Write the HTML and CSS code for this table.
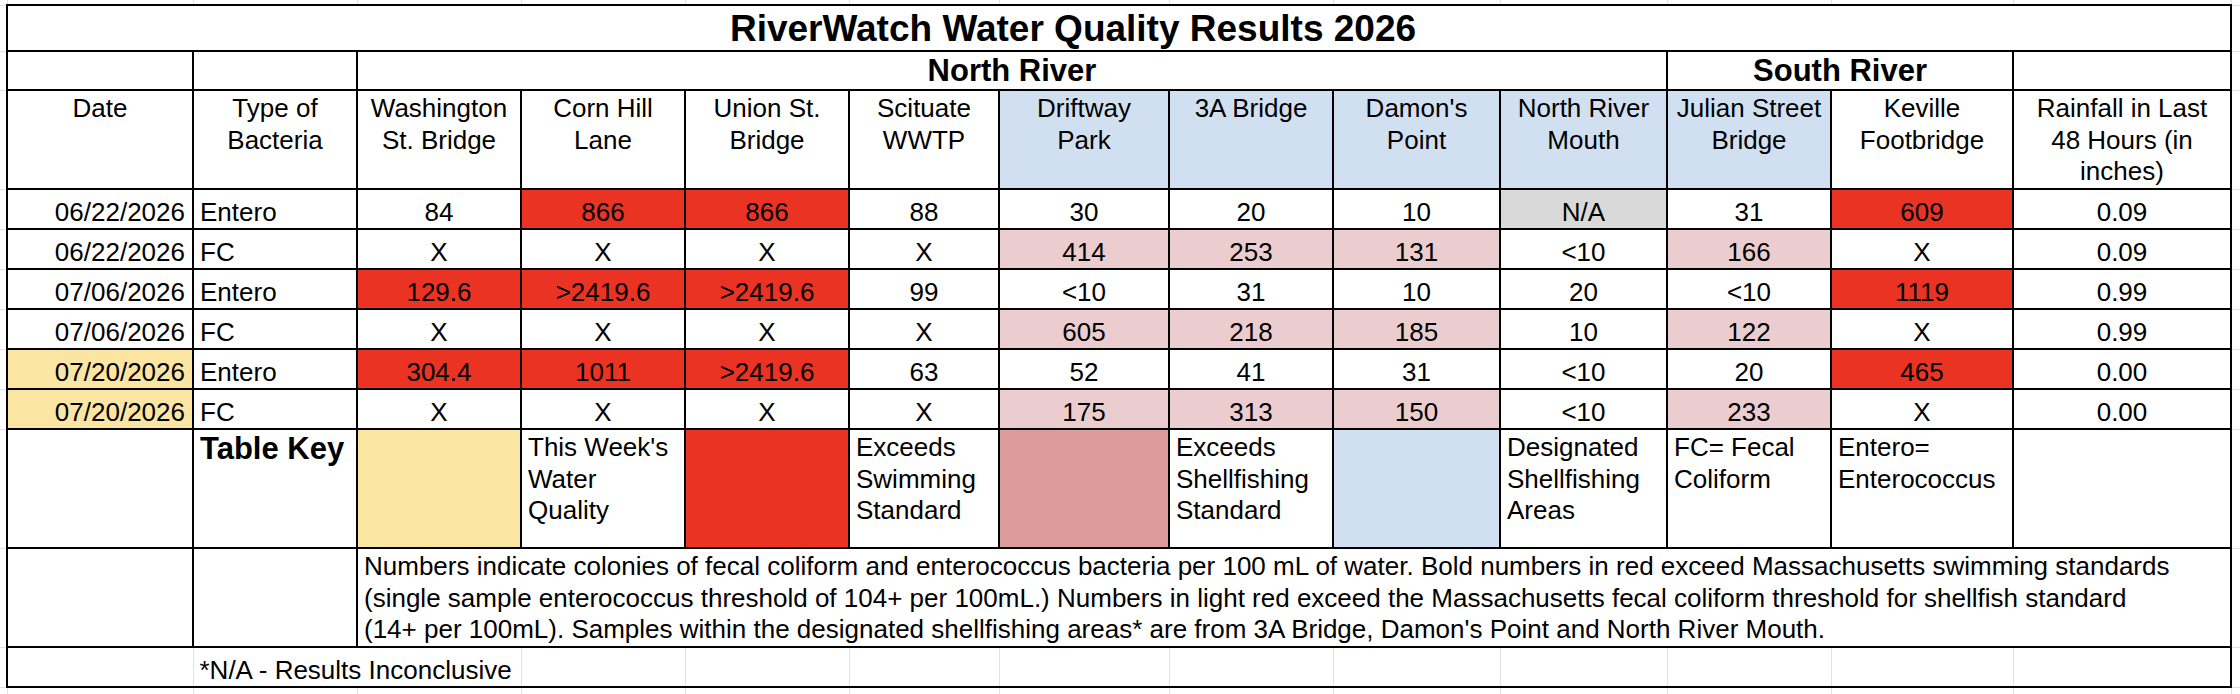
FILE: index.html
```html
<!DOCTYPE html>
<html lang="en">
<head>
<meta charset="utf-8">
<title>RiverWatch Water Quality Results 2026</title>
<link rel="stylesheet" href="styles.css">
</head>
<body>
<table class="sheet">
  <colgroup>
    <col class="w-edge-l">
    <col class="w-date">
    <col class="w-type">
    <col class="w-164">
    <col class="w-164">
    <col class="w-164">
    <col class="w-150">
    <col class="w-170">
    <col class="w-164">
    <col class="w-167">
    <col class="w-167">
    <col class="w-164">
    <col class="w-182">
    <col class="w-218">
    <col class="w-edge-r">
  </colgroup>
  <tbody>
    <tr class="h-edge-top">
      <td class="e et el"></td>
      <td class="e et"></td><td class="e et"></td><td class="e et"></td><td class="e et"></td><td class="e et"></td>
      <td class="e et"></td><td class="e et"></td><td class="e et"></td><td class="e et"></td><td class="e et"></td>
      <td class="e et"></td><td class="e et"></td><td class="e et"></td>
      <td class="e et er"></td>
    </tr>
    <tr class="h-title">
      <td class="e el"></td>
      <td class="title" colspan="13">RiverWatch Water Quality Results 2026</td>
      <td class="e er"></td>
    </tr>
    <tr class="h-river">
      <td class="e el"></td>
      <td></td>
      <td></td>
      <td class="river" colspan="8">North River</td>
      <td class="river" colspan="2">South River</td>
      <td></td>
      <td class="e er"></td>
    </tr>
    <tr class="h-head">
      <td class="e el"></td>
      <td class="hdr">Date</td>
      <td class="hdr">Type of<br>Bacteria</td>
      <td class="hdr">Washington<br>St. Bridge</td>
      <td class="hdr">Corn Hill<br>Lane</td>
      <td class="hdr">Union St.<br>Bridge</td>
      <td class="hdr">Scituate<br>WWTP</td>
      <td class="hdr blue">Driftway<br>Park</td>
      <td class="hdr blue">3A Bridge</td>
      <td class="hdr blue">Damon's<br>Point</td>
      <td class="hdr blue">North River<br>Mouth</td>
      <td class="hdr blue">Julian Street<br>Bridge</td>
      <td class="hdr">Keville<br>Footbridge</td>
      <td class="hdr">Rainfall in Last<br>48 Hours (in<br>inches)</td>
      <td class="e er"></td>
    </tr>
    <tr class="h-data">
      <td class="e el"></td>
      <td class="date">06/22/2026</td>
      <td class="type">Entero</td>
      <td class="num">84</td>
      <td class="num red">866</td>
      <td class="num red">866</td>
      <td class="num">88</td>
      <td class="num">30</td>
      <td class="num">20</td>
      <td class="num">10</td>
      <td class="num na">N/A</td>
      <td class="num">31</td>
      <td class="num red">609</td>
      <td class="num">0.09</td>
      <td class="e er"></td>
    </tr>
    <tr class="h-data">
      <td class="e el"></td>
      <td class="date">06/22/2026</td>
      <td class="type">FC</td>
      <td class="num">X</td>
      <td class="num">X</td>
      <td class="num">X</td>
      <td class="num">X</td>
      <td class="num pink">414</td>
      <td class="num pink">253</td>
      <td class="num pink">131</td>
      <td class="num">&lt;10</td>
      <td class="num pink">166</td>
      <td class="num">X</td>
      <td class="num">0.09</td>
      <td class="e er"></td>
    </tr>
    <tr class="h-data">
      <td class="e el"></td>
      <td class="date">07/06/2026</td>
      <td class="type">Entero</td>
      <td class="num red">129.6</td>
      <td class="num red">&gt;2419.6</td>
      <td class="num red">&gt;2419.6</td>
      <td class="num">99</td>
      <td class="num">&lt;10</td>
      <td class="num">31</td>
      <td class="num">10</td>
      <td class="num">20</td>
      <td class="num">&lt;10</td>
      <td class="num red">1119</td>
      <td class="num">0.99</td>
      <td class="e er"></td>
    </tr>
    <tr class="h-data">
      <td class="e el"></td>
      <td class="date">07/06/2026</td>
      <td class="type">FC</td>
      <td class="num">X</td>
      <td class="num">X</td>
      <td class="num">X</td>
      <td class="num">X</td>
      <td class="num pink">605</td>
      <td class="num pink">218</td>
      <td class="num pink">185</td>
      <td class="num">10</td>
      <td class="num pink">122</td>
      <td class="num">X</td>
      <td class="num">0.99</td>
      <td class="e er"></td>
    </tr>
    <tr class="h-data">
      <td class="e el"></td>
      <td class="date yellow">07/20/2026</td>
      <td class="type">Entero</td>
      <td class="num red">304.4</td>
      <td class="num red">1011</td>
      <td class="num red">&gt;2419.6</td>
      <td class="num">63</td>
      <td class="num">52</td>
      <td class="num">41</td>
      <td class="num">31</td>
      <td class="num">&lt;10</td>
      <td class="num">20</td>
      <td class="num red">465</td>
      <td class="num">0.00</td>
      <td class="e er"></td>
    </tr>
    <tr class="h-data">
      <td class="e el"></td>
      <td class="date yellow">07/20/2026</td>
      <td class="type">FC</td>
      <td class="num">X</td>
      <td class="num">X</td>
      <td class="num">X</td>
      <td class="num">X</td>
      <td class="num pink">175</td>
      <td class="num pink">313</td>
      <td class="num pink">150</td>
      <td class="num">&lt;10</td>
      <td class="num pink">233</td>
      <td class="num">X</td>
      <td class="num">0.00</td>
      <td class="e er"></td>
    </tr>
    <tr class="h-key">
      <td class="e el"></td>
      <td></td>
      <td class="key-label">Table Key</td>
      <td class="yellow"></td>
      <td class="key-text">This Week's<br>Water<br>Quality</td>
      <td class="red"></td>
      <td class="key-text">Exceeds<br>Swimming<br>Standard</td>
      <td class="pink-key"></td>
      <td class="key-text">Exceeds<br>Shellfishing<br>Standard</td>
      <td class="blue"></td>
      <td class="key-text">Designated<br>Shellfishing<br>Areas</td>
      <td class="key-text">FC= Fecal<br>Coliform</td>
      <td class="key-text">Entero=<br>Enterococcus</td>
      <td></td>
      <td class="e er"></td>
    </tr>
    <tr class="h-notes">
      <td class="e el"></td>
      <td></td>
      <td></td>
      <td class="notes" colspan="11">Numbers indicate colonies of fecal coliform and enterococcus bacteria per 100 mL of water. Bold numbers in red exceed Massachusetts swimming standards<br>(single sample enterococcus threshold of 104+ per 100mL.) Numbers in light red exceed the Massachusetts fecal coliform threshold for shellfish standard<br>(14+ per 100mL). Samples within the designated shellfishing areas* are from 3A Bridge, Damon's Point and North River Mouth.</td>
      <td class="e er"></td>
    </tr>
    <tr class="h-data">
      <td class="e el"></td>
      <td class="foot foot-first"></td>
      <td class="foot foot-text" colspan="2">*N/A - Results Inconclusive</td>
      <td class="foot"></td>
      <td class="foot"></td>
      <td class="foot"></td>
      <td class="foot"></td>
      <td class="foot"></td>
      <td class="foot"></td>
      <td class="foot"></td>
      <td class="foot"></td>
      <td class="foot"></td>
      <td class="foot foot-last"></td>
      <td class="e er"></td>
    </tr>
    <tr class="h-edge-bottom">
      <td class="e eb el"></td>
      <td class="e eb"></td><td class="e eb"></td><td class="e eb"></td><td class="e eb"></td><td class="e eb"></td>
      <td class="e eb"></td><td class="e eb"></td><td class="e eb"></td><td class="e eb"></td><td class="e eb"></td>
      <td class="e eb"></td><td class="e eb"></td><td class="e eb"></td>
      <td class="e eb er"></td>
    </tr>
  </tbody>
</table>
</body>
</html>
```

FILE: styles.css
```css
html, body {
  margin: 0;
  padding: 0;
  background: #ffffff;
}

body {
  font-family: "Liberation Sans", Arial, Helvetica, sans-serif;
  color: #000000;
  width: 2240px;
  height: 694px;
  overflow: hidden;
}

.sheet {
  border-collapse: collapse;
  table-layout: fixed;
  width: 2240px;
  font-size: 26px;
}

.w-edge-l { width: 7px; }
.w-date { width: 186px; }
.w-type { width: 164px; }
.w-164 { width: 164px; }
.w-150 { width: 150px; }
.w-170 { width: 170px; }
.w-167 { width: 167px; }
.w-182 { width: 182px; }
.w-218 { width: 218px; }
.w-edge-r { width: 9px; }

.h-edge-top { height: 5px; }
.h-title { height: 46px; }
.h-river { height: 39px; }
.h-head { height: 99px; }
.h-data { height: 40px; }
.h-key { height: 119px; }
.h-notes { height: 99px; }
.h-edge-bottom { height: 7px; }

.sheet td {
  border: 2px solid #000000;
  padding: 0 6px;
  vertical-align: bottom;
  line-height: 31.5px;
  white-space: nowrap;
  overflow: hidden;
}

/* spreadsheet gridlines outside the table */
.sheet td.e {
  border: 1px solid #e2e2e2;
  padding: 0;
  line-height: 0;
}
.sheet td.et { border-top: none; }
.sheet td.eb { border-bottom: none; }
.sheet td.el { border-left: none; }
.sheet td.er { border-right: none; }

.sheet td.title {
  font-weight: bold;
  font-size: 37px;
  line-height: 42px;
  text-align: center;
  vertical-align: bottom;
  padding: 0 98px 0 6px;
  overflow: visible;
}

.sheet td.river {
  font-weight: bold;
  font-size: 31px;
  line-height: 36px;
  text-align: center;
  overflow: visible;
}

.sheet td.hdr {
  vertical-align: top;
  text-align: center;
  padding: 2px 3px 0;
}

.sheet td.date {
  text-align: right;
  padding-right: 7px;
}

.sheet td.type {
  text-align: left;
  padding-left: 6px;
}

.sheet td.num {
  text-align: center;
}

.blue { background: #d0e0f1; }
.red { background: #ea3323; }
.pink { background: #ebcdcf; }
.pink-key { background: #dd9c9c; }
.na { background: #d9d9d9; }
.yellow { background: #fae5a2; }

.sheet td.key-label {
  vertical-align: top;
  font-weight: bold;
  font-size: 31px;
  line-height: 34px;
  padding: 2px 6px 0;
}

.sheet td.key-text {
  vertical-align: top;
  text-align: left;
  padding: 2px 6px 0;
}

.sheet td.notes {
  vertical-align: top;
  text-align: left;
  padding: 2px 6px 0;
}

.sheet td.foot {
  border-left: 1px solid #e2e2e2;
  border-right: 1px solid #e2e2e2;
}
.sheet td.foot-first { border-left: 2px solid #000000; }
.sheet td.foot-last { border-right: 2px solid #000000; }
.sheet td.foot-text {
  text-align: left;
  padding-left: 6px;
}
```
